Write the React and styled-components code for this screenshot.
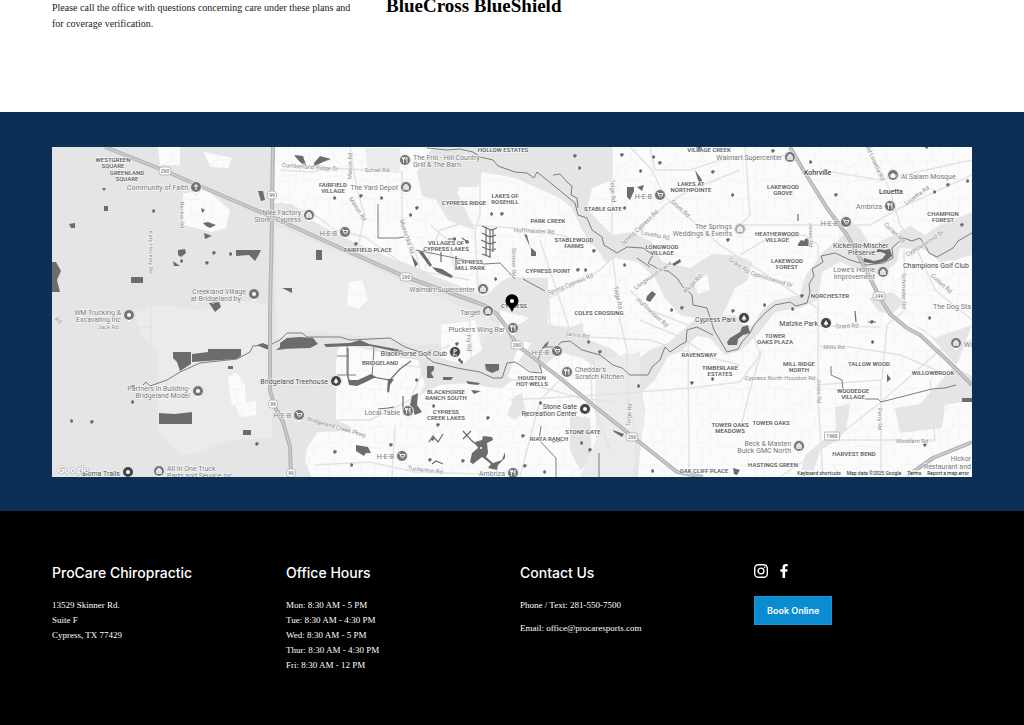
import React from "react";
import styled, { createGlobalStyle } from "styled-components";

const GlobalStyle = createGlobalStyle`
  *, *::before, *::after { box-sizing: border-box; }
  body { margin: 0; background: #000; color: #111; }
  h2, p, ul, address { margin: 0; padding: 0; font-style: normal; list-style: none; }
  a { color: inherit; text-decoration: none; }
`;

const serif = `"Liberation Serif", "Times New Roman", serif`;
const sans = `Inter, "Open Sans", sans-serif`;

/* ---------- Insurance section ---------- */

const Insurance = styled.section`
  display: grid;
  grid-template-columns: minmax(0, 300px) 1fr;
  column-gap: 34px;
  align-items: start;
  min-height: 112px;
  padding: 0 52px;
  background: #fff;
`;

const Note = styled.p`
  font: 10px/16px ${serif};
  color: #1a1a1a;
`;

const PlanName = styled.p`
  font: bold 19px/12px ${serif};
  color: #000;
  white-space: nowrap;
`;

/* ---------- Map section ---------- */

const MapBand = styled.section`
  padding: 35px 52px 34px;
  background: #0c2f55;
`;

const MapFrame = styled.div`
  position: relative;
  height: 330px;
  overflow: hidden;
  background: #fafafa;
`;

const MapDrawing = styled.svg`
  display: block;
  width: 100%;
  height: 100%;
  font-family: Roboto, sans-serif;
`;

const AreaLabel = styled.text`
  font-size: 6px;
  font-weight: 600;
  fill: #5c5c5c;
  text-anchor: middle;
  stroke: #fff;
  stroke-width: 1px;
  paint-order: stroke;
`;

const RoadLabel = styled.text`
  font-size: 6px;
  fill: #8e8e8e;
  text-anchor: middle;
  stroke: #fafafa;
  stroke-width: 1px;
  paint-order: stroke;
`;

const PlaceLabel = styled.text`
  font-size: 7px;
  font-weight: ${(p) => (p.$town ? 500 : 400)};
  fill: ${(p) => (p.$dark ? "#444" : "#747474")};
  text-anchor: ${(p) => p.$anchor};
  stroke: #fff;
  stroke-width: 1px;
  paint-order: stroke;
`;

const ShieldLabel = styled.text`
  font-size: 5px;
  font-weight: 500;
  fill: #777;
  text-anchor: middle;
`;

const MapLogo = styled.text`
  font: bold 10px Lato, sans-serif;
  fill: #fff;
  stroke: #aaa;
  stroke-width: 1px;
  paint-order: stroke;
`;

const Attribution = styled.div`
  position: absolute;
  right: 0;
  bottom: 0;
  display: flex;
  gap: 6px;
  padding: 0 3px;
  background: rgba(250, 250, 250, 0.7);
  color: #222;
  font: 5px/7px Roboto, sans-serif;
`;

const AttributionButton = styled.button`
  padding: 0;
  border: 0;
  background: none;
  color: inherit;
  font: inherit;
`;

const rural = [
  "M52 147H275V203L292 204L305 217L345 238L406 265L470 290L486 296L500 282L510 277L548 278V330L536 345L520 340L512 365L505 385L470 380L440 370L425 365L418 390L400 356L340 344L336 362L336 420L352 427L340 432L318 432L307 448L305 462L312 477H52Z",
  "M433 147L417 172L422 196L436 200L448 220L457 224L475 230L457 192L460 187H478L482 172L515 178L575 205L572 185L560 160L567 147Z",
  "M510 147H612V180L592 188L588 205L590 212L612 235L632 232L652 242L662 262L690 268L712 254L735 255L752 262L748 280L735 288L725 310L715 330L705 320L680 315L665 298L655 278L638 262L615 258L606 262L596 248L582 230L572 208L540 182L522 172H510Z",
  "M548 325L570 327L583 323L584 338L610 348L630 365L650 350L668 343L683 330L692 322L702 316L735 315L750 330L762 310L775 300L800 295L806 275L824 251L838 240L846 232L835 225L845 218L860 228L870 245L888 238L910 226L925 235L940 225L972 212V255L955 260L940 262L925 250L900 248L897 262L882 275L865 272L840 262L822 272L818 300L800 308L775 312L760 332L742 350L725 355L710 338L697 336L680 352L668 356L655 380L642 392L645 410L640 452L638 477H608L606 440L612 405L606 375L582 358L560 352L545 365L536 374L518 362L530 345Z",
  "M400 352L470 360L500 370L512 380L500 390L470 383L440 385L420 395L410 410L398 392Z",
  "M868 298L892 292L905 302L892 314L880 312Z",
  "M908 322L925 330L960 370L972 376V400L945 405L942 428L900 433L895 408L920 404L958 362L972 325L935 338Z",
  "M835 407L850 404L846 430L838 440L820 450L812 477H800L805 455L836 430Z",
  "M510 398L522 393L525 410L515 420L500 410Z",
  "M570 415L590 418L592 460L580 470L570 450Z",
];

const paleRural = [
  "M135 313L155 305L200 310L240 300L272 305V438L230 440L200 452L180 455L158 430V350L140 335Z",
  "M275 225L340 252L400 280L470 310L500 325L480 340L420 345L380 338L310 331L276 338Z",
  "M595 360L640 352V385L645 420L632 477H580L596 440Z",
  "M365 148H400V170L368 172Z",
];

const settled = [
  "M158 147H180V165H160Z",
  "M183 194L205 188L230 210L226 228L212 232L183 225Z",
  "M204 152L232 158L228 168L210 167Z",
  "M228 378L236 372L245 385L246 402L232 405L230 395Z",
  "M235 404L256 401V415L240 417Z",
  "M349 282L362 280L368 300L358 309L347 305Z",
  "M337 350L418 360L425 385L410 410L395 428L355 425L337 420Z",
  "M318 432L395 430L420 405L430 400L430 390L450 385L500 388L515 395L505 420L530 430L545 445L530 465L520 477H315L306 455Z",
  "M441 325L475 320L482 350L462 364L441 358Z",
  "M694 284L707 274L710 290L698 294Z",
  "M500 310L530 318L500 335Z",
];

const mainRoads = [
  "M153 230V147M134 147V228H183M151 228V477M52 333L150 327",
  "M280 170L312 172L330 168L402 172V225L415 250L423 282",
  "M350 147L357 190L365 215L358 245M280 203L315 215L335 230L365 237L400 262L425 272L470 280",
  "M480 147V215L475 230L478 290M425 268L440 230L460 224L515 228",
  "M612 147V250L620 320L627 350L628 400L636 440V477",
  "M510 228L560 235L615 250M518 315L600 270L665 205L690 190L740 170",
  "M630 147L652 170L665 197L720 245L790 290L820 310M740 225H870L900 208L972 175",
  "M740 255L765 240L805 235L818 245V400L823 477",
  "M870 150L890 190L900 225L915 245L935 290L972 320",
  "M818 346L850 347L900 355L960 380M818 385L852 382L881 380V477M818 326L880 327",
  "M904 250L905 310L887 325L882 380",
  "M972 340L940 350L881 402L820 450L780 477M828 440H935L930 380",
  "M510 333L570 336L650 340L680 350L740 365M510 400L600 395L690 388L740 382L760 355L750 325",
  "M400 365L430 368L470 372L515 380L580 398L615 402M469 310L472 370",
  "M280 418L320 420L370 420L410 400L430 355L450 345",
  "M315 465L370 462L415 472L480 474M395 425L392 477M562 378L540 400L520 477",
  "M688 325L689 477M740 430L750 390L762 350M590 340L592 400L610 450M548 290L550 325L575 336",
  "M640 320L680 337L700 350M630 290L650 310L700 330M430 225L448 240L455 270M540 240L553 280L570 330",
  "M650 147L655 170H690L720 160L792 155M745 147L750 215L740 225M820 170L880 180L972 160",
];

const highways = [
  "M105 147L165 171L230 199L272 217L345 250L406 277L470 300L486 306L497 314L507 328L517 345L560 378L593 405L633 437L677 472L703 477",
  "M273 147L272 195V218L270 315V390L274 405L283 422L290 447L291 477",
  "M790 147L805 173L827 208L847 235L862 262L880 298L890 314L907 328L920 335L947 360L972 385",
  "M906 477L933 458L972 442",
];

const creeks = [
  "M427 148L447 150L460 149L473 152L480 157L493 160L498 166L515 172L527 173L534 178L537 172L547 180L575 203L578 215L587 218L592 230L602 237L604 245L617 253L627 247L643 248L653 255L648 263L660 270L668 271L677 278L683 287L692 295L693 305L707 308L714 330L727 352L738 349L742 342L750 333L754 325L765 313L775 305L790 302L796 306L807 303L810 292L809 284L814 276L812 269L823 262L821 256L835 253L850 260L867 265L883 263L893 258L892 248L903 238L912 241L920 238L925 245L929 253L937 257L953 248L958 241L972 233",
  "M553 175L560 174L568 183L572 186L571 195L577 198L578 208",
  "M143 385L146 382L150 386L167 380L180 372L200 363L237 359L250 352L253 346L270 345L280 340L287 333L302 333L307 337L340 337L350 340L390 338L405 347L420 352L433 362L457 368L480 372L493 378L502 378L507 363L515 362L520 365L530 372L542 373L538 360L543 347L557 347L561 342L570 341L582 350L600 355L613 365L622 368L630 375H648L652 367L660 360L665 347L670 352L680 345L686 342L687 330L697 327L713 335",
  "M378 204V238H398L404 237M416 250L484 264L500 263L515 279",
  "M831 366V375L842 380L843 390M865 399H878L881 402L932 389L945 388L956 385",
  "M541 426L539 440L556 458V477M523 279L545 291M599 453V477M637 258L650 267",
  "M347 345V375M337 356H349M337 375H356M374 347L372 378",
];

const water = [
  "M52 262L56 262L61 271L57 280L60 292H52Z",
  "M173 352H191V364L180 371L177 362L173 358Z",
  "M192 354L208 352V349H241V356L236 359L192 362Z",
  "M159 413L175 414L192 412V424H159Z",
  "M131 277H143V283H131Z",
  "M236 250H261L258 256L255 261L249 255L236 256Z",
  "M258 191L263 191L265 200L261 201Z",
  "M178 250L185 249L186 253L181 257L178 255Z",
  "M69 224L75 223L75 228L71 228Z",
  "M209 303L219 302L221 307L215 312Z",
  "M104 206H108V211H104ZM102 188H106L104 191ZM173 261L180 266L174 266ZM203 223L208 222L216 225L210 228L206 226Z",
  "M204 233L212 236L205 239ZM201 208L205 210L202 213ZM228 366H233V369H228ZM243 430H251V435H243Z",
  "M280 343L287 338L300 337L313 338L318 344L310 348L280 349Z",
  "M324 344L350 343L360 340L369 344L396 349L404 351L398 352L370 346L355 346L326 347Z",
  "M257 345L263 343L269 346L272 350L266 349ZM276 350L284 344L286 349Z",
  "M294 155L303 156L307 168L299 161ZM314 163L320 156L331 159L323 162L313 167Z",
  "M316 250H322V260H316ZM282 288H292V293Z",
  "M418 251L423 252L432 265L430 267ZM432 267L442 269L453 276L451 278L437 272ZM411 254L418 264L415 267Z",
  "M524 234L527 235L530 247L536 252V256H531L531 249Z",
  "M627 187H634V191L630 200L627 197ZM637 187L644 185L642 191Z",
  "M647 296L652 291L656 294L650 302L646 300Z",
  "M672 264L680 259L681 262L674 266Z",
  "M727 342L730 338L740 332L742 327L748 325L750 333L743 335L738 339L737 345L728 345Z",
  "M696 147H702L701 152H697ZM695 170L702 180L701 185L698 180Z",
  "M798 244L801 240L804 241L806 238L809 240V246H798Z",
  "M864 258L874 261L882 259L886 254L881 252L876 252L878 249L885 250L890 249L892 256L886 261L876 264L863 262Z",
  "M962 398H972V402H962ZM947 311L956 317M887 374L891 379L887 382Z",
  "M485 364H499V370L492 373L486 370Z",
  "M427 366H434V370L431 373L434 378H427ZM443 377H453L451 380H443Z",
  "M412 396L418 393L417 405L422 412L415 415L410 405Z",
  "M347 375L350 380L358 380L371 374L376 377L366 382L357 386L349 385ZM388 379L394 379L390 385L389 393L387 391Z",
  "M356 445L368 447L371 453L366 453L364 456L356 451Z",
  "M470 462L472 453L478 448L475 442L482 440L483 436L492 437L493 440L487 443L488 453L486 457L493 463L502 460L505 452V458L498 465L497 470L488 468L491 464L482 457L473 464Z",
  "M613 430L624 434L622 437L614 432ZM545 344L549 341L547 346L542 349Z",
  "M733 468L740 470L737 475L734 474Z",
  "M466 381L480 383L478 385L468 384ZM471 390L481 391L474 394Z",
];

const ponds = [
  [154, 211], [214, 253], [231, 254], [207, 263], [182, 261], [133, 387], [72, 421], [92, 422], [133, 402],
  [257, 444], [335, 198], [361, 196], [382, 198], [417, 208], [411, 215], [356, 244], [492, 214], [502, 214],
  [455, 239], [467, 242], [496, 279], [575, 156], [580, 168], [622, 155], [654, 157], [660, 163], [641, 171],
  [713, 172], [625, 208], [594, 251], [625, 265], [578, 270], [586, 270], [728, 240], [733, 195], [773, 151],
  [811, 162], [836, 195], [935, 192], [948, 185], [968, 181], [962, 225], [927, 147], [733, 311],
  [672, 310], [682, 308], [589, 342], [600, 352], [639, 386], [692, 383], [713, 379], [523, 436], [582, 443],
  [590, 450], [653, 471], [525, 466], [545, 472], [526, 415], [541, 403], [488, 418], [460, 360], [457, 344],
  [417, 380], [335, 452], [352, 465], [391, 445], [434, 406], [438, 425], [433, 439], [463, 461], [873, 342],
  [872, 322], [930, 318], [925, 445], [793, 309], [802, 296], [765, 305], [430, 460], [462, 362],
];

const areas = [
  [113, 162, "WESTGREEN", "SQUARE"], [127, 175, "GREENLAND", "SQUARE"], [333, 187, "FAIRFIELD", "VILLAGE"],
  [503, 152, "HOLLOW ESTATES"], [505, 198, "LAKES OF", "ROSEHILL"], [464, 205, "CYPRESS RIDGE"],
  [548, 223, "PARK CREEK"], [574, 242, "STABLEWOOD", "FARMS"], [548, 273, "CYPRESS POINT"],
  [446, 245, "VILLAGES OF", "CYPRESS LAKES"], [470, 264, "CYPRESS", "MILL PARK"], [368, 252, "FAIRFIELD PLACE"],
  [603, 211, "STABLE GATE"], [709, 152, "VILLAGE CREEK"], [691, 186, "LAKES AT", "NORTHPOINTE"],
  [662, 249, "LONGWOOD", "VILLAGE"], [599, 315, "COLES CROSSING"], [514, 308, "CYPRESS"],
  [783, 189, "LAKEWOOD", "GROVE"], [777, 236, "HEATHERWOOD", "VILLAGE"], [787, 263, "LAKEWOOD", "FOREST"],
  [830, 298, "NORCHESTER"], [943, 216, "CHAMPION", "FOREST"], [699, 357, "RAVENSWAY"],
  [720, 370, "TIMBERLAKE", "ESTATES"], [775, 338, "TOWER", "OAKS PLAZA"], [799, 366, "MILL RIDGE", "NORTH"],
  [869, 366, "TALLOW WOOD"], [933, 375, "WILLOWBROOK"], [853, 393, "WOODEDGE", "VILLAGE"],
  [771, 425, "TOWER OAKS"], [730, 427, "TOWER OAKS", "MEADOWS"], [854, 456, "HARVEST BEND"],
  [773, 467, "HASTINGS GREEN"], [704, 473, "OAK CLIFF PLACE"], [380, 365, "BRIDGELAND"],
  [446, 394, "BLACKHORSE", "RANCH SOUTH"], [446, 414, "CYPRESS", "CREEK LAKES"], [532, 380, "HOUSTON", "HOT WELLS"],
  [583, 434, "STONE GATE"], [549, 441, "RIATA RANCH"],
];

const roadNames = [
  [180, 215, 90, "Becker Rd"], [149, 252, 90, "Katy Hockley Rd"], [310, 169, 4, "Cumberland Ridge Dr"],
  [377, 172, 0, "Schiel Rd"], [352, 166, -88, "Mason Rd"], [356, 210, 58, "Mason Rd"], [405, 237, 72, "Mueschke Rd"],
  [534, 233, 3, "Huffmeister Rd"], [512, 262, 90, "Skinner Rd"], [611, 191, 86, "Telge Rd"],
  [641, 229, -43, "Spring Cypress Rd"], [571, 286, -22, "Spring Cypress Rd"], [679, 210, 42, "Grant Rd"],
  [655, 237, 12, "Louetta Rd"], [918, 197, -35, "Louetta Rd"], [873, 163, 66, "Old Louetta Rd"],
  [893, 234, 45, "Cutten Rd"], [940, 285, 42, "Cutten Rd"], [926, 245, -32, "Cypresswood Dr"],
  [771, 281, 17, "Cypresswood Dr"], [809, 235, 90, "Jones Rd"], [817, 391, 90, "Jones Rd"],
  [902, 291, 90, "Schroeder Rd"], [616, 298, 78, "Telge Rd"], [631, 415, -86, "Telge Rd"],
  [654, 277, -35, "Longwood Trace"], [694, 285, -45, "Kluge Rd"], [651, 314, 42, "Huffmeister Rd"],
  [738, 267, 35, "Grant Rd"], [847, 328, -2, "Grant Rd"], [834, 349, 0, "Mills Rd"],
  [780, 380, 0, "Cypress North Houston Rd"], [878, 419, 90, "Perry Rd"], [912, 443, 0, "Windfern Rd"],
  [577, 337, 8, "Jarvis Rd"], [467, 343, 86, "Fry Rd"], [336, 429, 16, "Bridgeland Creek Pkwy"],
  [425, 472, 7, "Tuckerton Rd"], [108, 329, 0, "Jack Rd"], [57, 322, 40, "Rd"],
];

/* x and y are the pin centre; side tells on which side of it the name stands */
const places = [
  { x: 196, y: 187, icon: "cross", lines: ["Community of Faith"], dy: 3 },
  { x: 405, y: 160, icon: "fork", side: "right", lines: ["The Frio - Hill Country", "Grill & The Barn"] },
  { x: 406, y: 187, icon: "bag", lines: ["The Yard Depot"], dy: 3 },
  { x: 309, y: 215, icon: "bag", lines: ["Nike Factory", "Store - Cypress"] },
  { x: 345, y: 232, icon: "cart", lines: ["H-E-B"], dy: 4 },
  { x: 483, y: 289, icon: "bag", lines: ["Walmart Supercenter"], dy: 3 },
  { x: 488, y: 311, icon: "bag", lines: ["Target"], dy: 4 },
  { x: 513, y: 328, icon: "fork", lines: ["Pluckers Wing Bar"], dy: 4 },
  { x: 660, y: 195, icon: "cart", lines: ["H-E-B"], dy: 4 },
  { x: 740, y: 229, icon: "bag", pale: true, lines: ["The Springs", "Weddings & Events"] },
  { x: 790, y: 157, icon: "bag", lines: ["Walmart Supercenter"], dy: 3 },
  { x: 893, y: 175, icon: "mosque", side: "right", lines: ["Al Salam Mosque"], dy: 4 },
  { x: 890, y: 206, icon: "fork", lines: ["Ambriza"], dy: 3 },
  { x: 846, y: 222, icon: "cart", lines: ["H-E-B"], dy: 4 },
  { x: 883, y: 272, icon: "bag", lines: ["Lowe's Home", "Improvement"] },
  { x: 254, y: 294, icon: "dot", lines: ["Creekland Village", "at Bridgeland by..."] },
  { x: 129, y: 315, icon: "dot", lines: ["WM Trucking &", "Excavating Inc"] },
  { x: 198, y: 391, icon: "dot", lines: ["Partners in Building-", "Bridgeland Model"] },
  { x: 744, y: 318, icon: "tree", dark: true, lines: ["Cypress Park"], dy: 4 },
  { x: 826, y: 323, icon: "tree", dark: true, lines: ["Matzke Park"], dy: 3 },
  { x: 455, y: 352, icon: "golf", dark: true, lines: ["BlackHorse Golf Club"], dy: 4 },
  { x: 336, y: 381, icon: "tree", dark: true, lines: ["Bridgeland Treehouse"], dy: 3 },
  { x: 408, y: 411, icon: "fork", lines: ["Local Table"], dy: 4 },
  { x: 299, y: 415, icon: "cart", lines: ["H-E-B"], dy: 3 },
  { x: 402, y: 456, icon: "cart", lines: ["H-E-B"], dy: 3 },
  { x: 513, y: 473, icon: "fork", lines: ["Ambriza"], dy: 3 },
  { x: 567, y: 372, icon: "fork", side: "right", lines: ["Cheddar's", "Scratch Kitchen"] },
  { x: 557, y: 351, icon: "cart", lines: ["H-E-B"], dy: 4 },
  { x: 585, y: 409, icon: "dot", dark: true, lines: ["Stone Gate", "Recreation Center"] },
  { x: 799, y: 446, icon: "bag", lines: ["Beck & Masten", "Buick GMC North"] },
  { x: 956, y: 343, icon: "bag", side: "right", lines: ["Wi"], dy: 4 },
  { x: 128, y: 472, icon: "dot", dark: true, lines: ["Paloma Trails"], dy: 4 },
  { x: 159, y: 471, icon: "bag", side: "right", lines: ["All In One Truck", "Parts and Service Inc"] },
];

const loneLabels = [
  { x: 804, y: 175, text: "Kohrville", town: true },
  { x: 879, y: 194, text: "Louetta", town: true },
  { x: 833, y: 248, text: "Kickerillo-Mischer" },
  { x: 848, y: 255, text: "Preserve" },
  { x: 903, y: 268, text: "Champions Golf Club" },
  { x: 971, y: 309, text: "The Dog Sta", pale: true, anchor: "end" },
  { x: 971, y: 461, text: "Hickor", pale: true, anchor: "end" },
  { x: 971, y: 469, text: "Restaurant and", pale: true, anchor: "end" },
  { x: 884, y: 147, text: "Tomball", town: true },
];

const shields = [
  [165, 171, "290"], [406, 277, "290"], [517, 345, "290"], [632, 437, "290"],
  [272, 195, "99"], [273, 404, "99"], [291, 473, "99"], [879, 296, "249"], [832, 436, "1960"],
];

const glyphs = {
  dot: <circle r="2" fill="#fff" />,
  cross: <path d="M0-3V3M-2-1H2" stroke="#fff" fill="none" />,
  fork: <path d="M-1.500-3V3M-2.500-3V-1H-.5V-3M2-3V3M2-2.500H1V0H2" stroke="#fff" strokeWidth=".8" fill="none" />,
  bag: <path d="M-2.500-1H2.500V2.500H-2.500ZM-1.200-1V-2.500H1.200V-1" fill="#fff" fillOpacity=".75" stroke="#fff" strokeWidth=".6" />,
  cart: <path d="M-3-2.500H-2L-1 1H2L3-1.500H-1.600M-.8 2.400h.4M1.600 2.400H2" fill="none" stroke="#fff" strokeWidth=".9" />,
  tree: <path d="M0-3L2.500 1.500H.5V3H-.5V1.500H-2.500Z" fill="#fff" />,
  golf: <path d="M-1 3V-3L2-1.500L-1 0M-2.500 3H2" fill="none" stroke="#fff" strokeWidth=".9" />,
  mosque: <path d="M-3 2.500V-1M3 2.500V-1M-2 2.500V0Q0-3.500 2 0V2.500Z" fill="#fff" stroke="#fff" strokeWidth=".6" />,
};

function Place({ x, y, icon, side = "left", lines, dy = 0, dark, pale }) {
  const right = side === "right";
  const fill = dark ? "#444" : pale ? "#aaa" : "#747474";
  return (
    <g transform={`translate(${x} ${y})`}>
      {lines.map((line, i) => (
        <PlaceLabel key={line} x={right ? 8 : -8} y={dy + i * 7} $dark={dark} $anchor={right ? "start" : "end"}>
          {line}
        </PlaceLabel>
      ))}
      <path
        d="M0 8Q-2 5.500-4 4A5.700 5.700 0 1 1 4 4Q2 5.500 0 8Z"
        fill="#fff"
        stroke="#d0d0d0"
        strokeWidth=".5"
      />
      <circle r="5" fill={fill} />
      {glyphs[icon]}
    </g>
  );
}

function Shield({ x, y, text }) {
  const width = text.length * 3 + 3;
  return (
    <g transform={`translate(${x} ${y})`}>
      <rect x={-width / 2} y="-4" width={width} height="8" rx={text === "1960" ? 1 : 3} fill="#fff" stroke="#aaa" strokeWidth=".8" />
      <ShieldLabel y="2">{text}</ShieldLabel>
    </g>
  );
}

function OfficeMap() {
  return (
    <MapDrawing viewBox="52 147 920 330" preserveAspectRatio="xMidYMid slice" role="img" aria-label="Map of Cypress, Texas">
      <defs>
        <pattern id="streets" width="46" height="38" patternUnits="userSpaceOnUse">
          <rect width="46" height="38" fill="#fbfbfb" />
          <path
            d="M0 9H14Q20 10 20 16V38M20 16L33 8H46M33 0V8M7 9V24H20M0 30H12V38M28 12V28H46M20 32L28 28M38 28V38M12 0V9M39 8V20"
            fill="none"
            stroke="#f3f3f3"
          />
        </pattern>
      </defs>
      <rect x="52" y="147" width="920" height="330" fill="url(#streets)" />
      {rural.map((d) => <path key={d} d={d} fill="#e5e5e5" />)}
      {paleRural.map((d) => <path key={d} d={d} fill="#ebebeb" />)}
      {settled.map((d) => <path key={d} d={d} fill="url(#streets)" />)}
      <g fill="none" strokeLinejoin="round">
        {mainRoads.map((d) => <path key={d} d={d} stroke="#e3e3e3" strokeWidth="1.500" />)}
        {creeks.map((d) => <path key={d} d={d} stroke="#7d7d7d" strokeWidth="1" />)}
      </g>
      <g fill="#6c6c6c">
        {water.map((d) => <path key={d} d={d} />)}
        {ponds.map(([x, y], i) => (
          <path key={i} d={i % 2 ? `M${x - 2} ${y - 1}l2-1 2 1-1 2-2 1z` : `M${x - 1} ${y - 2}l2 1 0 2-2 1-1-2z`} />
        ))}
      </g>
      <path
        d="M482 226L491 230L497 228M482 233L490 237L496 235M481 240L490 244L496 242M482 247L490 250L496 249M482 254L490 257M486 227V255M490 230V258M493 229V252M463 431L471 440M471 431L463 439M471 440L478 446M429 442L433 436L438 442L443 434M432 464L436 461L443 464M448 239H455M462 238L469 243M441 252V262M456 256V266M798 214V221M855 311L856 322M868 322H876M403 396V410M348 348V378M373 377L390 380L400 369L411 361M378 409L388 408L394 407M552 442L561 441"
        fill="none"
        stroke="#6c6c6c"
        strokeWidth="1.200"
      />
      <circle cx="481" cy="448" r="1" fill="#fff" />
      <g fill="none" strokeLinejoin="round">
        {highways.map((d) => <path key={d} d={d} stroke="#b3b3b3" strokeWidth="4" />)}
        {highways.map((d) => <path key={d} d={d} stroke="#cdcdcd" strokeWidth="1.500" />)}
      </g>
      {roadNames.map(([x, y, angle, name]) => (
        <RoadLabel key={`${name}${x}`} transform={`translate(${x} ${y}) rotate(${angle})`}>{name}</RoadLabel>
      ))}
      {shields.map(([x, y, text]) => <Shield key={`${x}${y}`} x={x} y={y} text={text} />)}
      {areas.map(([x, y, ...lines]) =>
        lines.map((line, i) => <AreaLabel key={`${line}${x}`} x={x} y={y + i * 6}>{line}</AreaLabel>)
      )}
      {loneLabels.map((l) => (
        <PlaceLabel key={l.text} x={l.x} y={l.y} $anchor={l.anchor || "start"} $town={l.town} $dark={!l.pale}>{l.text}</PlaceLabel>
      ))}
      {places.map((p) => <Place key={`${p.x}${p.y}`} {...p} />)}
      <path d="M512 312Q510 307 507 305A6.500 6.500 0 1 1 517 305Q514 307 512 312Z" fill="#000" />
      <circle cx="512" cy="301" r="2" fill="#fff" />
      <MapLogo x="57" y="473">Google</MapLogo>
    </MapDrawing>
  );
}

/* ---------- Footer ---------- */

const Footer = styled.footer`
  display: grid;
  grid-template-columns: repeat(4, 1fr);
  column-gap: 16px;
  min-height: 214px;
  padding: 52px 52px 48px;
  background: #000;
  color: #fff;
`;

const Column = styled.div`
  display: flex;
  flex-direction: column;
  align-items: flex-start;
  gap: 15px;
`;

const Heading = styled.h2`
  font: 500 14px/20px ${sans};
`;

const Details = styled.div`
  display: grid;
  row-gap: ${(p) => (p.$spaced ? "8px" : "0")};
  font: 9px/15px ${serif};
`;

const SocialLinks = styled.div`
  display: flex;
  gap: 8px;
  padding-top: 1px;
`;

const SocialLink = styled.a`
  display: flex;
  svg { display: block; width: 14px; height: 14px; }
`;

const SocialColumn = styled(Column)`
  gap: 18px;
`;

const BookButton = styled.button`
  padding: 0 12px;
  border: 1px solid #1b96da;
  background: #0b8bd0;
  color: #fff;
  font: 600 9px/27px ${sans};
`;

export default function App() {
  return (
    <>
      <GlobalStyle />
      <main>
        <Insurance>
          <Note>
            Please call the office with questions concerning care under these plans and for coverage verification.
          </Note>
          <PlanName>BlueCross BlueShield</PlanName>
        </Insurance>
        <MapBand>
          <MapFrame>
            <OfficeMap />
            <Attribution>
              <AttributionButton type="button">Keyboard shortcuts</AttributionButton>
              <span>Map data ©2025 Google</span>
              <a href="#terms">Terms</a>
              <a href="#report">Report a map error</a>
            </Attribution>
          </MapFrame>
        </MapBand>
      </main>
      <Footer>
        <Column>
          <Heading>ProCare Chiropractic</Heading>
          <Details as="address">
            <span>13529 Skinner Rd.</span>
            <span>Suite F</span>
            <span>Cypress, TX 77429</span>
          </Details>
        </Column>
        <Column>
          <Heading>Office Hours</Heading>
          <Details as="ul">
            <li>Mon: 8:30 AM - 5 PM</li>
            <li>Tue: 8:30 AM - 4:30 PM</li>
            <li>Wed: 8:30 AM - 5 PM</li>
            <li>Thur: 8:30 AM - 4:30 PM</li>
            <li>Fri: 8:30 AM - 12 PM</li>
          </Details>
        </Column>
        <Column>
          <Heading>Contact Us</Heading>
          <Details $spaced>
            <p>Phone / Text: <a href="tel:2815507500">281-550-7500</a></p>
            <p>Email: <a href="mailto:office@procaresports.com">office@procaresports.com</a></p>
          </Details>
        </Column>
        <SocialColumn>
          <SocialLinks>
            <SocialLink href="#instagram" aria-label="Instagram">
              <svg viewBox="0 0 14 14" fill="none" stroke="#fff">
                <rect x=".7" y=".7" width="12.600" height="12.600" rx="3.600" strokeWidth="1.400" />
                <circle cx="7" cy="7" r="2.900" strokeWidth="1.400" />
                <circle cx="10.700" cy="3.300" r=".8" fill="#fff" stroke="none" />
              </svg>
            </SocialLink>
            <SocialLink href="#facebook" aria-label="Facebook">
              <svg viewBox="0 0 14 14" fill="#fff">
                <path d="M6.500 14V7.700H4.300V5.200H6.500V3.400C6.500 1.200 7.800 0 9.800 0C10.700 0 11.500.1 11.700.1V2.300H10.400C9.300 2.300 9.100 2.800 9.100 3.600V5.200H11.600L11.300 7.700H9.100V14Z" />
              </svg>
            </SocialLink>
          </SocialLinks>
          <BookButton type="button">Book Online</BookButton>
        </SocialColumn>
      </Footer>
    </>
  );
}
